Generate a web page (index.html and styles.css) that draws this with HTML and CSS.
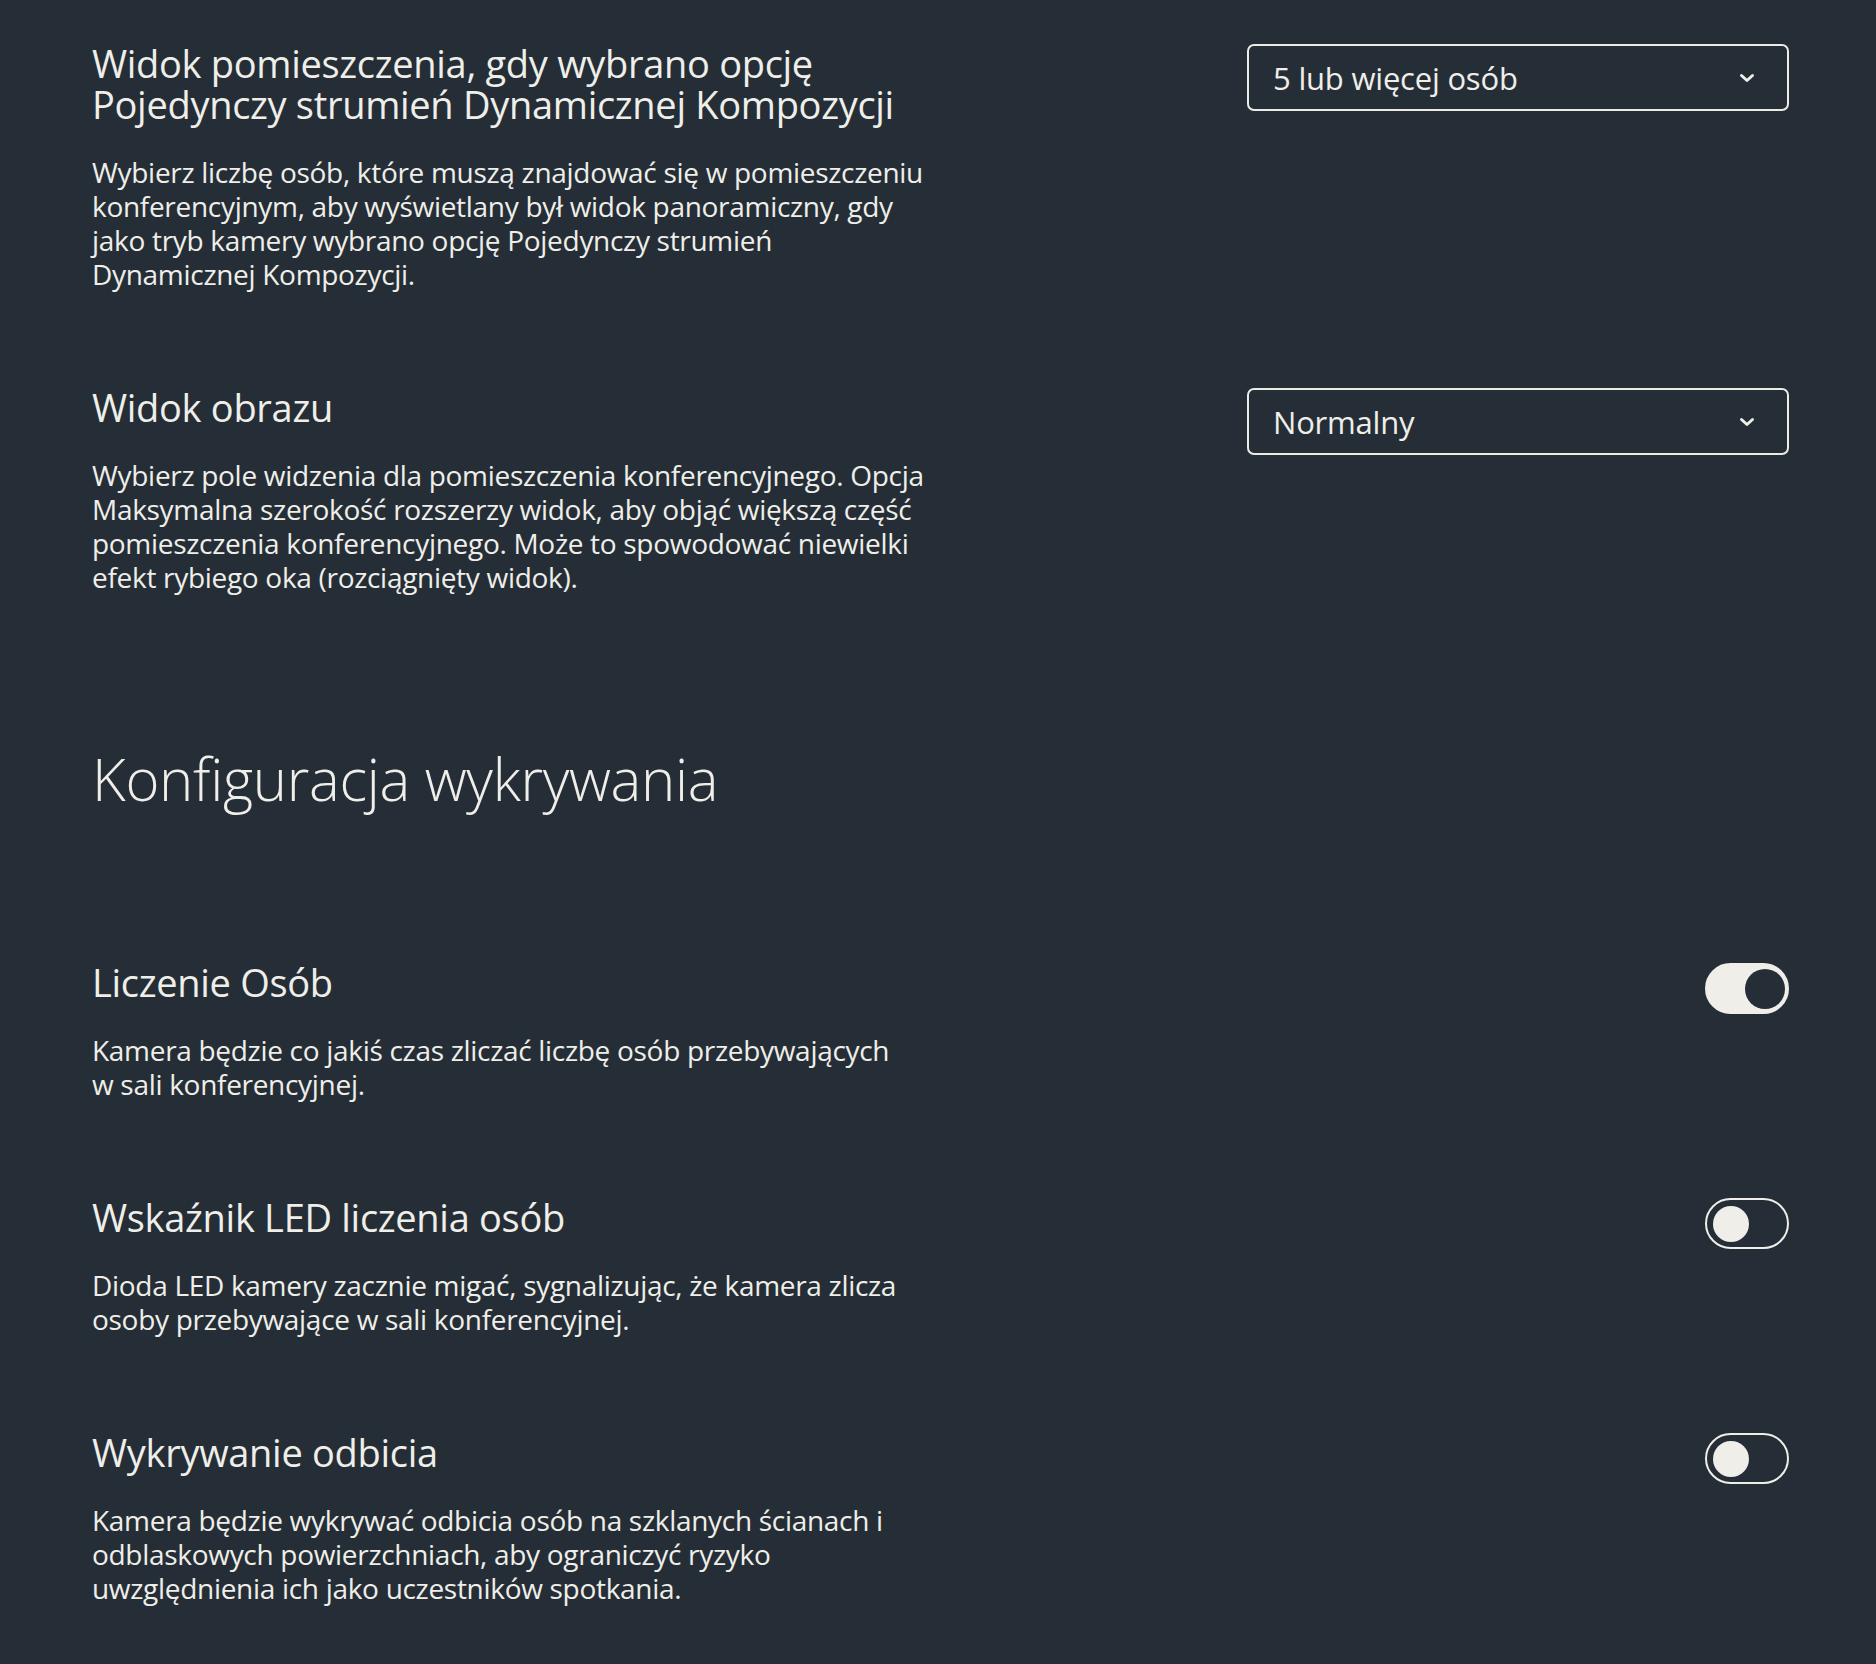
FILE: index.html
```html
<!DOCTYPE html>
<html lang="pl">
<head>
<meta charset="utf-8">
<title>Ustawienia kamery</title>
<link rel="stylesheet" href="styles.css">
</head>
<body>
<main class="page">
  <section class="setting">
    <div class="text">
      <h3 class="title"><span class="line">Widok pomieszczenia, gdy wybrano opcję</span><span class="line">Pojedynczy strumień Dynamicznej Kompozycji</span></h3>
      <p class="desc">Wybierz liczbę osób, które muszą znajdować się w pomieszczeniu konferencyjnym, aby wyświetlany był widok panoramiczny, gdy jako tryb kamery wybrano opcję Pojedynczy strumień Dynamicznej Kompozycji.</p>
    </div>
    <div class="select">
      <span class="select-value">5 lub więcej osób</span>
      <svg class="chevron" viewBox="0 0 16 10" width="16" height="10"><path d="M2.5 2.5l5.5 5 5.5-5" fill="none" stroke="currentColor" stroke-width="3" stroke-linecap="round" stroke-linejoin="round"/></svg>
    </div>
  </section>

  <section class="setting">
    <div class="text">
      <h3 class="title">Widok obrazu</h3>
      <p class="desc">Wybierz pole widzenia dla pomieszczenia konferencyjnego. Opcja Maksymalna szerokość rozszerzy widok, aby objąć większą część pomieszczenia konferencyjnego. Może to spowodować niewielki efekt rybiego oka (rozciągnięty widok).</p>
    </div>
    <div class="select">
      <span class="select-value">Normalny</span>
      <svg class="chevron" viewBox="0 0 16 10" width="16" height="10"><path d="M2.5 2.5l5.5 5 5.5-5" fill="none" stroke="currentColor" stroke-width="3" stroke-linecap="round" stroke-linejoin="round"/></svg>
    </div>
  </section>

  <h2 class="section-heading">Konfiguracja wykrywania</h2>

  <section class="setting">
    <div class="text">
      <h3 class="title">Liczenie Osób</h3>
      <p class="desc">Kamera będzie co jakiś czas zliczać liczbę osób przebywających w&nbsp;sali konferencyjnej.</p>
    </div>
    <div class="toggle on"><span class="knob"></span></div>
  </section>

  <section class="setting">
    <div class="text">
      <h3 class="title">Wskaźnik LED liczenia osób</h3>
      <p class="desc">Dioda LED kamery zacznie migać, sygnalizując, że kamera zlicza osoby przebywające w&nbsp;sali konferencyjnej.</p>
    </div>
    <div class="toggle"><span class="knob"></span></div>
  </section>

  <section class="setting">
    <div class="text">
      <h3 class="title">Wykrywanie odbicia</h3>
      <p class="desc">Kamera będzie wykrywać odbicia osób na szklanych ścianach i odblaskowych powierzchniach, aby ograniczyć ryzyko uwzględnienia ich jako uczestników spotkania.</p>
    </div>
    <div class="toggle"><span class="knob"></span></div>
  </section>
</main>
</body>
</html>
```

FILE: styles.css
```css
html, body {
  margin: 0;
  padding: 0;
  background: #252e37;
}
body {
  color: #efeee9;
  font-family: "Open Sans", "Noto Sans", sans-serif;
  min-height: 1664px;
}
.page {
  padding: 43px 87px 40px 92px;
  display: flex;
  flex-direction: column;
}
.setting {
  display: flex;
  justify-content: space-between;
  align-items: flex-start;
  margin-bottom: 96px;
}
.setting:last-child {
  margin-bottom: 0;
}
.text {
  width: 840px;
}
.title {
  margin: 0;
  font-size: 38px;
  line-height: 41px;
  font-weight: 500;
  letter-spacing: -0.3px;
}
.title .line {
  display: block;
}
.desc {
  margin: 30px 0 0;
  max-width: 832px;
  font-size: 28px;
  line-height: 34px;
  font-weight: 400;
  letter-spacing: -0.3px;
}
.select {
  width: 542px;
  height: 67px;
  box-sizing: border-box;
  border: 2px solid #ecebe6;
  border-radius: 7px;
  display: flex;
  align-items: center;
  justify-content: space-between;
  padding: 0 32px 0 24px;
  margin-top: 1px;
}
.select-value {
  font-size: 31px;
  letter-spacing: -0.2px;
}
.chevron {
  color: #efeee9;
}
.section-heading {
  margin: 54px 0 148px;
  font-size: 58px;
  line-height: 70px;
  font-weight: 300;
  letter-spacing: -0.3px;
}
.toggle {
  width: 84px;
  height: 51px;
  box-sizing: border-box;
  border: 2px solid #efeee9;
  border-radius: 26px;
  padding: 0 6px;
  display: flex;
  align-items: center;
  margin-top: 1px;
}
.toggle .knob {
  width: 36px;
  height: 36px;
  border-radius: 50%;
  background: #efeee9;
}
.toggle.on {
  background: #efeee9;
  justify-content: flex-end;
  padding: 0 2px;
}
.toggle.on .knob {
  width: 40px;
  height: 40px;
  background: #252e37;
}
```
